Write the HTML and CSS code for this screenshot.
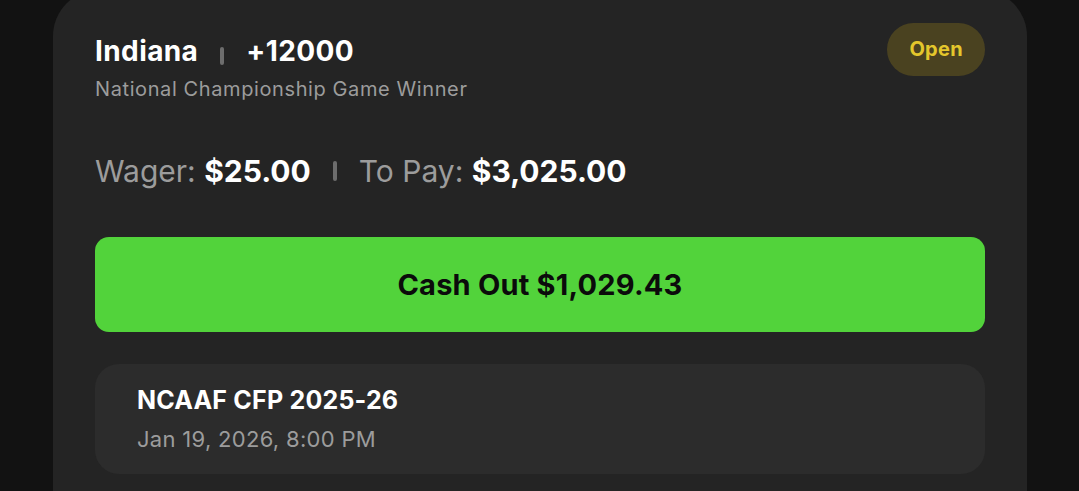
FILE: index.html
```html
<!DOCTYPE html>
<html lang="en">
<head>
	<meta charset="UTF-8">
	<title>Bet Slip</title>
	<link rel="stylesheet" href="styles.css">
</head>
<body>
<div class="card">
	<div class="head">
		<div class="pick">
			<div class="title">
				<span>Indiana</span>
				<i class="sep"></i>
				<span>+12000</span>
			</div>
			<div class="market">National Championship Game Winner</div>
		</div>
		<span class="badge">Open</span>
	</div>
	<div class="stake">
		<span>Wager: <b>$25.00</b></span>
		<i class="sep"></i>
		<span>To Pay: <b>$3,025.00</b></span>
	</div>
	<button type="button" class="cash">Cash Out $1,029.43</button>
	<div class="event">
		<div class="ename">NCAAF CFP 2025-26</div>
		<div class="edate">Jan 19, 2026, 8:00 PM</div>
	</div>
</div>
</body>
</html>
```
FILE: styles.css
```css
body {
	margin: 0;
	background: #121212;
	font-family: Inter, "Liberation Sans", sans-serif;
	color: #fff;
	overflow: hidden;
}
.card {
	width: 974px;
	height: 501px;
	margin: -10px 0 0 53px;
	padding: 45px 42px 0;
	box-sizing: border-box;
	background: #242424;
	border-radius: 46px 46px 0 0;
}
.head {
	display: flex;
	justify-content: space-between;
	align-items: flex-start;
}
.title {
	display: flex;
	align-items: center;
	gap: 22px;
	font-size: 28px;
	font-weight: 700;
	line-height: 32px;
	letter-spacing: 0.4px;
}
.sep {
	display: inline-block;
	width: 4px;
	height: 18px;
	border-radius: 2px;
	background: #6d6d6d;
	margin-top: 9px;
}
.market {
	margin-top: 10px;
	font-size: 20px;
	color: #9c9c9c;
	letter-spacing: 0.6px;
}
.badge {
	margin-top: -12px;
	padding: 0 22px;
	height: 53px;
	line-height: 53px;
	border-radius: 27px;
	background: #4a4220;
	color: #e4c72c;
	font-size: 20px;
	font-weight: 700;
	letter-spacing: 0.3px;
}
.stake {
	display: flex;
	align-items: center;
	gap: 22px;
	margin-top: 52px;
	font-size: 30px;
	color: #9c9c9c;
}
.stake b {
	color: #fff;
}
.stake .sep {
	height: 20px;
	margin-top: 0;
}
.cash {
	display: block;
	width: 100%;
	height: 95px;
	margin-top: 48px;
	border: 0;
	border-radius: 14px;
	background: #52d33b;
	color: #0b0b0b;
	font-family: inherit;
	font-size: 29px;
	font-weight: 700;
	letter-spacing: 0.2px;
	cursor: pointer;
}
.event {
	margin-top: 32px;
	height: 110px;
	box-sizing: border-box;
	padding: 22px 42px;
	background: #2c2c2c;
	border-radius: 24px;
}
.ename {
	font-size: 25px;
	font-weight: 700;
	line-height: 28px;
	letter-spacing: 0.2px;
}
.edate {
	margin-top: 12px;
	font-size: 22px;
	color: #9c9c9c;
	letter-spacing: 0.3px;
}
```
